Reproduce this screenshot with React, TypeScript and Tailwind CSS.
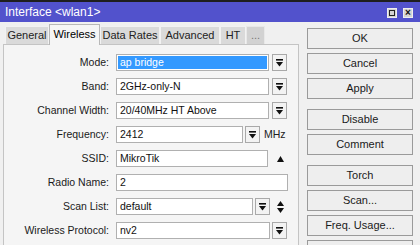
const TABS = [
  { label: 'General', w: 'w-[44px]' },
  { label: 'Wireless', w: 'w-[51px]', active: true },
  { label: 'Data Rates', w: 'w-[60px]' },
  { label: 'Advanced', w: 'w-[60px]' },
  { label: 'HT', w: 'w-[26px]' },
  { label: '...', w: 'w-[19px]', dim: true },
]

const BUTTONS = [
  { label: 'OK' },
  { label: 'Cancel' },
  { label: 'Apply' },
  { label: 'Disable', gap: true },
  { label: 'Comment' },
  { label: 'Torch', gap: true },
  { label: 'Scan...' },
  { label: 'Freq. Usage...' },
  { label: '' },
]

function DropIcon() {
  return (
    <svg width="7" height="8" viewBox="0 0 7 8">
      <rect x="0" y="0" width="7" height="1.6" fill="#111" />
      <polygon points="0,3 7,3 3.5,7.5" fill="#111" />
    </svg>
  )
}

function DropButton() {
  return (
    <div className="w-[15px] h-[17px] border border-[#a9a9a9] bg-[#f3f3f3] flex items-center justify-center shrink-0">
      <DropIcon />
    </div>
  )
}

function Field({ value, w, selected }: { value: string; w: string; selected?: boolean }) {
  return (
    <div className={`${w} h-[17px] border border-[#b0b0b0] bg-white shrink-0 p-[1px] flex`}>
      <div
        className={`flex-1 flex items-center pl-[2px] leading-none ${selected ? 'bg-[#3399ff] text-white' : 'text-[#111]'}`}
      >
        {value}
      </div>
    </div>
  )
}

function Row({ label, children }: { label: string; children: React.ReactNode }) {
  return (
    <div className="flex items-center h-[17px]">
      <div className="w-[106px] text-right pr-[1px] mr-[6px] text-[#1a1a1a] shrink-0">{label}</div>
      {children}
    </div>
  )
}

export default function App() {
  return (
    <div className="w-[420px] h-[245px] overflow-hidden bg-[#f0f0f0] font-['Liberation_Sans',Arial,sans-serif] text-[10.5px] text-black">
      <div className="h-[2px] bg-[#1e1e1e]" />

      {/* title bar */}
      <div className="h-[20px] bg-[#5252cc] flex items-center pl-[5px] pr-[7px] text-white text-[12px]">
        <span className="flex-1">Interface &lt;wlan1&gt;</span>
        <div className="flex gap-[6px] pt-[2px]">
          <div className="w-[10px] h-[10px] bg-[#d4d4d4] border border-[#eee] flex items-center justify-center">
            <div className="w-[6px] h-[6px] border border-[#222]" />
          </div>
          <div className="w-[10px] h-[10px] bg-[#d4d4d4] border border-[#eee] flex items-center justify-center text-[#111] text-[10px] font-bold leading-none">
            ×
          </div>
        </div>
      </div>

      <div className="flex">
        {/* tabs + panel */}
        <div className="w-[299px] pl-[3px] pt-[2px] shrink-0">
          <div className="flex items-end h-[20px] pl-[2px]">
            {TABS.map((t) => (
              <div
                key={t.label}
                className={`${t.w} flex items-center justify-center border border-b-0 ${
                  t.active
                    ? 'h-[21px] bg-[#f5f5f5] border-[#b8b8b8] text-[11px] -mb-[1px] relative z-10 pb-[2px]'
                    : t.dim
                      ? 'h-[18px] bg-[#d2d2d2] border-[#e8e8e8] text-[#777] text-[11px]'
                      : 'h-[18px] bg-[#dadada] border-[#f2f2f2] text-[11px] text-[#222]'
                }`}
              >
                {t.label}
              </div>
            ))}
          </div>
          <div className="h-[210px] border border-[#c4c4c4] bg-[#f5f5f5] pt-[9px] flex flex-col gap-[7px]">
            <Row label="Mode:">
              <Field value="ap bridge" w="w-[153px]" selected />
              <div className="ml-[3px]"><DropButton /></div>
            </Row>
            <Row label="Band:">
              <Field value="2GHz-only-N" w="w-[153px]" />
              <div className="ml-[3px]"><DropButton /></div>
            </Row>
            <Row label="Channel Width:">
              <Field value="20/40MHz HT Above" w="w-[153px]" />
              <div className="ml-[3px]"><DropButton /></div>
            </Row>
            <Row label="Frequency:">
              <Field value="2412" w="w-[127px]" />
              <div className="ml-[2px]"><DropButton /></div>
              <span className="ml-[4px] text-[#222]">MHz</span>
            </Row>
            <Row label="SSID:">
              <Field value="MikroTik" w="w-[152px]" />
              <svg className="ml-[9px]" width="7" height="6" viewBox="0 0 7 6">
                <polygon points="0,6 7,6 3.5,0" fill="#111" />
              </svg>
            </Row>
            <Row label="Radio Name:">
              <Field value="2" w="w-[172px]" />
            </Row>
            <Row label="Scan List:">
              <Field value="default" w="w-[137px]" />
              <div className="ml-[2px]"><DropButton /></div>
              <svg className="ml-[7px]" width="7" height="12" viewBox="0 0 7 12">
                <polygon points="0,5 7,5 3.5,0" fill="#111" />
                <polygon points="0,7 7,7 3.5,12" fill="#111" />
              </svg>
            </Row>
            <Row label="Wireless Protocol:">
              <Field value="nv2" w="w-[154px]" />
              <div className="ml-[2px]"><DropButton /></div>
            </Row>
          </div>
        </div>

        {/* action buttons */}
        <div className="w-[114px] pl-[8px] pt-[6px] flex flex-col gap-[4px] shrink-0">
          {BUTTONS.map((b, i) => (
            <div
              key={i}
              className={`h-[21px] w-[106px] shrink-0 border border-[#9a9a9a] bg-[#eeeeee] flex items-center justify-center text-[11px] text-[#1a1a1a] ${
                b.gap ? 'mt-[6px]' : ''
              }`}
            >
              {b.label}
            </div>
          ))}
        </div>
      </div>
    </div>
  )
}
